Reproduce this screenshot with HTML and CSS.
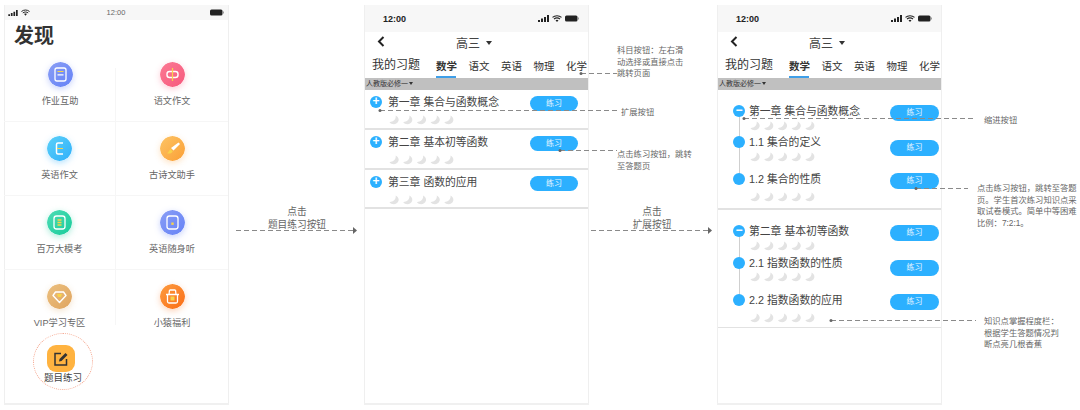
FILE: index.html
```html
<!DOCTYPE html>
<html lang="zh-CN">
<head>
  <meta charset="UTF-8" />
  <title>发现 / 我的习题 流程图</title>
  <link rel="stylesheet" href="styles.css">
</head>
<body>

  <svg class="defs" width="0" height="0">
    <defs>
      <symbol id="banana" viewBox="0 0 10 10">
        <path d="M6.6 .4C7.4 3.6 5 6.8 .5 7.2 2.2 9.8 8.2 10.4 9.6 5.6 10.1 3.6 8.6 1.2 6.6 .4Z" fill="#e3e3e3"/>
      </symbol>
      <symbol id="signal" viewBox="0 0 11 7">
        <path d="M0 5h2v2H0zM3 3.5h2V7H3zM6 2h2v5H6zM9 0h2v7H9z" fill="currentColor"/>
      </symbol>
      <symbol id="wifi" viewBox="0 0 10 7">
        <path d="M.5 2.4C3 .2 7 .2 9.500 2.400M2 4C3.800 2.600 6.200 2.600 8 4" fill="none" stroke="currentColor" stroke-width="1.100"/>
        <path d="M3.500 5.200C4.400 4.500 5.600 4.500 6.500 5.200L5 7Z" fill="currentColor"/>
      </symbol>
      <symbol id="battery" viewBox="0 0 14 7">
        <rect width="12.500" height="6" y=".5" rx="1.500" fill="currentColor"/>
        <rect x="13" y="2.500" width="1" height="2" fill="#999"/>
      </symbol>
      <symbol id="bananas" viewBox="0 0 65 10">
        <use href="#banana" x="0" width="10" height="10"/>
        <use href="#banana" x="13.700" width="10" height="10"/>
        <use href="#banana" x="27.400" width="10" height="10"/>
        <use href="#banana" x="41.100" width="10" height="10"/>
        <use href="#banana" x="54.800" width="10" height="10"/>
      </symbol>
      <linearGradient id="g-blue" x1="0" y1="0" x2="1" y2="1"><stop offset="0" stop-color="#8a9ef5"/><stop offset="1" stop-color="#6582f7"/></linearGradient>
      <linearGradient id="g-red" x1="0" y1="0" x2="1" y2="1"><stop offset="0" stop-color="#fb7a94"/><stop offset="1" stop-color="#f7587c"/></linearGradient>
      <linearGradient id="g-sky" x1="0" y1="0" x2="1" y2="1"><stop offset="0" stop-color="#5cd0f8"/><stop offset="1" stop-color="#2fb0fb"/></linearGradient>
      <linearGradient id="g-orange" x1="0" y1="0" x2="1" y2="1"><stop offset="0" stop-color="#fdc465"/><stop offset="1" stop-color="#fb9f35"/></linearGradient>
      <linearGradient id="g-green" x1="0" y1="0" x2="1" y2="1"><stop offset="0" stop-color="#4fdcb6"/><stop offset="1" stop-color="#17cc9a"/></linearGradient>
      <linearGradient id="g-gold" x1="0" y1="0" x2="1" y2="1"><stop offset="0" stop-color="#ecc07f"/><stop offset="1" stop-color="#dfa45f"/></linearGradient>
      <linearGradient id="g-fire" x1="0" y1="0" x2="1" y2="1"><stop offset="0" stop-color="#fd9c3f"/><stop offset="1" stop-color="#fa6d17"/></linearGradient>
    </defs>
  </svg>

  <div class="canvas">

    <!-- 发现页 -->
    <section class="phone phone-find">
      <div class="status status-small">
        <span class="status-icons">
          <svg width="10" height="6"><use href="#signal"/></svg>
          <svg width="9" height="7"><use href="#wifi"/></svg>
        </span>
        <span class="status-time">12:00</span>
        <svg class="status-batt" width="14" height="7"><use href="#battery"/></svg>
      </div>
      <h1 class="find-title">发现</h1>
      <div class="find-grid">
        <div class="cell">
          <svg class="disc disc-blue" viewBox="0 0 25 25"><circle cx="12.500" cy="12.500" r="12.500" fill="url(#g-blue)"/><rect x="7" y="6" width="11" height="13" rx="2" fill="none" stroke="#fff" stroke-width="1.300"/><path d="M9.500 9.500h6" stroke="#f7d34a" stroke-width="1.200"/><path d="M9.500 12.800h6" stroke="#fff" stroke-width="1.200"/></svg>
          <span>作业互助</span>
        </div>
        <div class="cell">
          <svg class="disc disc-red" viewBox="0 0 25 25"><circle cx="12.500" cy="12.500" r="12.500" fill="url(#g-red)"/><rect x="7" y="9.500" width="11" height="6" rx="2.500" fill="none" stroke="#fff" stroke-width="1.400"/><path d="M12.500 6v13" stroke="#f7d34a" stroke-width="1.200"/></svg>
          <span>语文作文</span>
        </div>
        <div class="cell">
          <svg class="disc disc-sky" viewBox="0 0 25 25"><circle cx="12.500" cy="12.500" r="12.500" fill="url(#g-sky)"/><path d="M16 7h-5a1.500 1.500 0 0 0-1.500 1.500v8A1.500 1.500 0 0 0 11 18h5" fill="none" stroke="#fff" stroke-width="1.500"/><path d="M10 12.500h6" stroke="#f7d34a" stroke-width="1.200"/></svg>
          <span>英语作文</span>
        </div>
        <div class="cell">
          <svg class="disc disc-orange" viewBox="0 0 25 25"><circle cx="12.500" cy="12.500" r="12.500" fill="url(#g-orange)"/><path d="M18.500 6.500 20 8 13.500 14.500 11 12Z" fill="#fff"/><path d="M10.300 13 12.800 15.500C11.500 17.500 9.500 17.800 7 17.500 8.500 16.500 9 14.500 10.300 13Z" fill="#f7d34a"/></svg>
          <span>古诗文助手</span>
        </div>
        <div class="cell">
          <svg class="disc disc-green" viewBox="0 0 25 25"><circle cx="12.500" cy="12.500" r="12.500" fill="url(#g-green)"/><rect x="7" y="6" width="11" height="13" rx="2.500" fill="none" stroke="#fff" stroke-width="1.300"/><path d="M10.500 10h4M10.500 12.500h4M10.500 15h4" stroke="#f7d34a" stroke-width="1.300"/></svg>
          <span>百万大模考</span>
        </div>
        <div class="cell">
          <svg class="disc disc-blue" viewBox="0 0 25 25"><circle cx="12.500" cy="12.500" r="12.500" fill="url(#g-blue)"/><rect x="7" y="6" width="11" height="13" rx="2.500" fill="none" stroke="#fff" stroke-width="1.300"/><rect x="11.300" y="12.500" width="2.400" height="2.400" fill="#f7d34a"/></svg>
          <span>英语随身听</span>
        </div>
        <div class="cell">
          <svg class="disc disc-gold" viewBox="0 0 25 25"><circle cx="12.500" cy="12.500" r="12.500" fill="url(#g-gold)"/><path d="M8.500 8h8L19 11.500 12.500 18.500 6 11.500Z" fill="none" stroke="#fff" stroke-width="1.400" stroke-linejoin="round"/><path d="M10 10h5l-1 3h-3Z" fill="#f7d34a"/></svg>
          <span>VIP学习专区</span>
        </div>
        <div class="cell">
          <svg class="disc disc-fire" viewBox="0 0 25 25"><circle cx="12.500" cy="12.500" r="12.500" fill="url(#g-fire)"/><path d="M6 10.500h13M7.500 10.500v7a1.500 1.500 0 0 0 1.500 1.500h7a1.500 1.500 0 0 0 1.500-1.500v-7M9 10.500 9.500 6M16 10.500 15.500 6M9.500 6h6" fill="none" stroke="#fff" stroke-width="1.300"/><rect x="10.500" y="12.500" width="4" height="4" fill="#f7d34a"/></svg>
          <span>小猿福利</span>
        </div>
      </div>
      <div class="practice-ring">
        <div class="practice-icon">
          <svg width="16" height="16" viewBox="0 0 16 16"><path d="M8 2.500H2v11.500h11.500V8" fill="none" stroke="#333" stroke-width="1.500"/><path d="M6 10.500 6.500 8 12.500 2 14.500 4 8.500 10Z" fill="#333"/></svg>
        </div>
        <span>题目练习</span>
      </div>
    </section>

    <!-- 我的习题：章列表 -->
    <section class="phone">
      <div class="status">
        <span class="status-clock">12:00</span>
        <span class="status-icons">
          <svg width="11" height="7"><use href="#signal"/></svg>
          <svg width="10" height="7"><use href="#wifi"/></svg>
          <svg width="14" height="7"><use href="#battery"/></svg>
        </span>
      </div>
      <div class="nav">
        <svg class="nav-back" width="8" height="11" viewBox="0 0 8 11"><path d="M6.500 1 2 5.500 6.500 10" fill="none" stroke="#222" stroke-width="2"/></svg>
        <span class="nav-grade">高三</span>
        <span class="caret"></span>
      </div>
      <div class="tabs">
        <span class="tabs-title">我的习题</span>
        <span class="tab tab-active">数学</span>
        <span class="tab">语文</span>
        <span class="tab">英语</span>
        <span class="tab">物理</span>
        <span class="tab">化学</span>
      </div>
      <div class="edition">人教版必修一<span class="caret caret-small"></span></div>
      <div class="chapter">
        <div class="chapter-head">
          <span class="dot">+</span>
          <span class="chapter-name">第一章 集合与函数概念</span>
          <span class="btn">练习</span>
        </div>
        <svg class="bananas" width="65" height="10"><use href="#bananas"/></svg>
      </div>
      <div class="chapter">
        <div class="chapter-head">
          <span class="dot">+</span>
          <span class="chapter-name">第二章 基本初等函数</span>
          <span class="btn">练习</span>
        </div>
        <svg class="bananas" width="65" height="10"><use href="#bananas"/></svg>
      </div>
      <div class="chapter">
        <div class="chapter-head">
          <span class="dot">+</span>
          <span class="chapter-name">第三章 函数的应用</span>
          <span class="btn">练习</span>
        </div>
        <svg class="bananas" width="65" height="10"><use href="#bananas"/></svg>
      </div>
    </section>

    <!-- 我的习题：展开 -->
    <section class="phone phone-open">
      <div class="status">
        <span class="status-clock">12:00</span>
        <span class="status-icons">
          <svg width="11" height="7"><use href="#signal"/></svg>
          <svg width="10" height="7"><use href="#wifi"/></svg>
          <svg width="14" height="7"><use href="#battery"/></svg>
        </span>
      </div>
      <div class="nav">
        <svg class="nav-back" width="8" height="11" viewBox="0 0 8 11"><path d="M6.500 1 2 5.500 6.500 10" fill="none" stroke="#222" stroke-width="2"/></svg>
        <span class="nav-grade">高三</span>
        <span class="caret"></span>
      </div>
      <div class="tabs">
        <span class="tabs-title">我的习题</span>
        <span class="tab tab-active">数学</span>
        <span class="tab">语文</span>
        <span class="tab">英语</span>
        <span class="tab">物理</span>
        <span class="tab">化学</span>
      </div>
      <div class="edition">人教版必修一<span class="caret caret-small"></span></div>

      <div class="tree">
        <div class="tree-row tree-top">
          <span class="dot dot-tree">&minus;</span>
          <span class="chapter-name">第一章 集合与函数概念</span>
          <span class="btn">练习</span>
          <svg class="bananas" width="65" height="10"><use href="#bananas"/></svg>
        </div>
        <div class="tree-row tree-mid">
          <span class="dot dot-tree"></span>
          <span class="chapter-name">1.1 集合的定义</span>
          <span class="btn btn-low">练习</span>
          <svg class="bananas" width="65" height="10"><use href="#bananas"/></svg>
        </div>
        <div class="tree-row tree-end">
          <span class="dot dot-tree"></span>
          <span class="chapter-name">1.2 集合的性质</span>
          <span class="btn">练习</span>
          <svg class="bananas" width="65" height="10"><use href="#bananas"/></svg>
        </div>
      </div>

      <div class="tree tree-second">
        <div class="tree-row tree-top">
          <span class="dot dot-tree">&minus;</span>
          <span class="chapter-name">第二章 基本初等函数</span>
          <span class="btn">练习</span>
          <svg class="bananas" width="65" height="10"><use href="#bananas"/></svg>
        </div>
        <div class="tree-row tree-mid">
          <span class="dot dot-tree"></span>
          <span class="chapter-name">2.1 指数函数的性质</span>
          <span class="btn btn-low">练习</span>
          <svg class="bananas" width="65" height="10"><use href="#bananas"/></svg>
        </div>
        <div class="tree-row tree-end">
          <span class="dot dot-tree"></span>
          <span class="chapter-name">2.2 指数函数的应用</span>
          <span class="btn">练习</span>
          <svg class="bananas" width="65" height="10"><use href="#bananas"/></svg>
        </div>
      </div>
    </section>

    <!-- 连接线和说明 -->
    <svg class="wires" width="1080" height="410">
      <g fill="none" stroke="#8a8a8a" stroke-width="1" stroke-dasharray="5 3">
        <path d="M236 230.500H353"/>
        <path d="M591 230.500H708"/>
        <path d="M581 73.500H617"/>
        <path d="M380 110.500H617"/>
        <path d="M560 150.500H617"/>
        <path d="M744 118.500H976"/>
        <path d="M916 188.500H968"/>
        <path d="M831 320.500H976"/>
      </g>
      <g fill="#666">
        <path d="M353 227 357 230.500 353 234Z"/>
        <path d="M708 227 712 230.500 708 234Z"/>
        <circle cx="581" cy="73.500" r="1.500"/>
        <circle cx="380" cy="110.500" r="1.500"/>
        <circle cx="560" cy="150.500" r="1.500"/>
        <circle cx="744" cy="118.500" r="1.500"/>
        <circle cx="916" cy="188.500" r="1.500"/>
        <circle cx="831" cy="320.500" r="1.500"/>
      </g>
    </svg>

    <div class="flow-label flow-a">点击<br>题目练习按钮</div>
    <div class="flow-label flow-b">点击<br>扩展按钮</div>

    <p class="note note-subject">科目按钮：左右滑<br>动选择或直接点击<br>跳转页面</p>
    <p class="note note-expand">扩展按钮</p>
    <p class="note note-jump">点击练习按钮，跳转<br>至答题页</p>
    <p class="note note-fold">缩进按钮</p>
    <p class="note note-first">点击练习按钮，跳转至答题<br>页。学生首次练习知识点采<br>取试卷模式。简单中等困难<br>比例：7:2:1。</p>
    <p class="note note-level">知识点掌握程度栏：<br>根据学生答题情况判<br>断点亮几根香蕉</p>

  </div>

</body>
</html>
```

FILE: styles.css
```css
* {
  box-sizing: border-box;
}

body {
  margin: 0;
  background-color: white;
  color: #333;
  font-family: "Liberation Sans", "Noto Sans CJK SC", sans-serif;
}

.defs {
  position: absolute;
}

.canvas {
  position: relative;
  display: flex;
  gap: 129px;
  width: 1080px;
  height: 410px;
  padding: 5px 0 5px 4px;
  overflow: hidden;
}

.canvas .phone:nth-child(2) {
  margin-left: 6px;
}

.phone {
  flex: none;
  width: 225px;
  height: 400px;
  background-color: white;
  border-left: 1px solid #efefef;
  border-right: 1px solid #efefef;
  border-bottom: 2px solid #f0f0f0;
}

.phone-open {
  margin-left: -1px;
}

/* status bars */
.status {
  display: flex;
  align-items: center;
  justify-content: space-between;
  height: 27px;
  padding: 0 9px 0 18px;
  background-color: #f7f7f7;
  color: #222;
}

.status-clock {
  font-size: 9px;
  font-weight: 700;
}

.status-icons {
  display: flex;
  align-items: center;
  gap: 3px;
}

.status-icons svg {
  display: block;
}

.status-small {
  display: grid;
  grid-template-columns: 1fr auto 1fr;
  align-items: center;
  height: 15px;
  padding: 0 4px 0 3px;
}

.status-batt {
  justify-self: end;
}

.status-time {
  font-size: 7.500px;
  color: #666;
}

/* discover page */
.find-title {
  height: 28px;
  margin: 0 0 0 9px;
  font-size: 20px;
  line-height: 32px;
  font-weight: 700;
  color: #333;
}

.find-grid {
  display: grid;
  grid-template-columns: 112px 112px;
  grid-template-rows: 74px 74px 74px 55px;
  margin-left: -1px;
}

.cell {
  display: flex;
  flex-direction: column;
  align-items: center;
  padding-top: 14px;
  font-size: 9.200px;
  color: #666;
}

.cell:nth-child(-n+6) {
  border-bottom: 1px solid #f6f6f6;
}

.cell:nth-child(odd) {
  border-right: 1px solid #f6f6f6;
}

.cell:first-child {
  border-right: none;
  background: linear-gradient(#f6f6f6, #f6f6f6) 100% 20px / 1px 100% no-repeat;
}

.cell span {
  margin-top: 8px;
  line-height: 13px;
  white-space: nowrap;
}

.disc {
  flex: none;
  display: block;
  width: 25px;
  height: 25px;
  border-radius: 50%;
}

.disc-blue { box-shadow: 0 2px 6px rgba(101, 130, 247, 0.35); }
.disc-red { box-shadow: 0 2px 6px rgba(247, 88, 124, 0.3); }
.disc-sky { box-shadow: 0 2px 6px rgba(47, 176, 251, 0.35); }
.disc-orange { box-shadow: 0 2px 6px rgba(251, 159, 53, 0.3); }
.disc-green { box-shadow: 0 2px 6px rgba(23, 204, 154, 0.35); }
.disc-gold { box-shadow: 0 2px 6px rgba(223, 164, 95, 0.3); }
.disc-fire { box-shadow: 0 2px 6px rgba(250, 109, 23, 0.3); }

.practice-ring {
  display: flex;
  flex-direction: column;
  align-items: center;
  width: 60px;
  height: 57px;
  margin: 8px 0 0 28px;
  padding-top: 11px;
  border: 1px dotted #f5a78f;
  border-radius: 50%;
  font-size: 9.500px;
  color: #444;
}

.practice-icon {
  flex: none;
  display: flex;
  align-items: center;
  justify-content: center;
  width: 28px;
  height: 27px;
  margin-right: 4px;
  background-color: #ffb340;
  border-radius: 9px;
}

.practice-ring span {
  line-height: 12px;
  white-space: nowrap;
}

/* top of the exercise page */
.nav {
  display: flex;
  align-items: center;
  height: 20px;
  padding: 1px 0 0 12px;
}

.nav-back {
  display: block;
  margin-top: -2px;
}

.nav-grade {
  margin-left: 71px;
  font-size: 12px;
  color: #444;
}

.caret {
  width: 0;
  height: 0;
  margin-left: 6px;
  border-left: 3px solid transparent;
  border-right: 3px solid transparent;
  border-top: 4px solid #333;
}

.caret-small {
  display: inline-block;
  margin-left: 1px;
  vertical-align: 1px;
  border-left-width: 2px;
  border-right-width: 2px;
  border-top-width: 3px;
}

.tabs {
  display: flex;
  align-items: flex-end;
  height: 26px;
  padding-left: 7px;
  color: #333;
}

.tabs-title {
  flex: none;
  width: 64px;
  padding-bottom: 6px;
  font-size: 12px;
  line-height: 14px;
  white-space: nowrap;
}

.tab {
  flex: none;
  width: 32.500px;
  height: 26px;
  padding-top: 7px;
  font-size: 10.500px;
  line-height: 14px;
  white-space: nowrap;
}

.tab-active {
  font-weight: 700;
  background: linear-gradient(#3f9fe8, #3f9fe8) 0 100% / 20px 2px no-repeat;
}

.edition {
  height: 12px;
  padding-left: 1px;
  background-color: #c0c0c0;
  font-size: 7px;
  line-height: 12px;
  color: #333;
}

/* chapter cards */
.chapter {
  height: 40px;
  padding: 6px 10px 0 5px;
  border-bottom: 2px solid #e2e2e2;
}

.chapter:last-child {
  height: 39px;
}

.chapter-head {
  display: flex;
  align-items: center;
  height: 15px;
}

.chapter-head .dot,
.chapter-head .chapter-name {
  margin-top: -3px;
}

.dot {
  flex: none;
  width: 12px;
  height: 12px;
  border-radius: 50%;
  background-color: #2cb0ff;
  color: white;
  font-size: 12px;
  line-height: 11px;
  font-weight: 700;
  text-align: center;
}

.chapter-name {
  margin-left: 6px;
  font-size: 10.800px;
  line-height: 14px;
  color: #444;
  white-space: nowrap;
}

.btn {
  width: 48px;
  height: 15px;
  margin-left: auto;
  border-radius: 8px;
  background-color: #2cb0ff;
  color: #e8f6ff;
  font-size: 8px;
  line-height: 15px;
  text-align: center;
}

.bananas {
  display: block;
  margin: 4px 0 0 19px;
}

/* expanded tree */
.tree {
  position: relative;
  height: 120px;
  padding-top: 14px;
  border-bottom: 2px solid #e2e2e2;
}

.tree::before {
  content: "";
  position: absolute;
  left: 20.500px;
  top: 24px;
  height: 70px;
  border-left: 1px solid #cfcfcf;
}

.tree-second {
  height: 118px;
  border-bottom: 1px solid #e2e2e2;
}

.tree-row {
  position: relative;
  display: flex;
  align-items: flex-start;
  flex-wrap: wrap;
  padding: 0 1px 0 15px;
}

.tree-top {
  height: 31px;
}

.tree-mid {
  height: 37px;
}

.tree-end {
  height: 35px;
}

.tree-second .tree-top {
  height: 32px;
}

.dot-tree {
  position: relative;
  z-index: 1;
  margin-top: 1px;
  font-size: 12px;
}

.tree-row .chapter-name {
  margin-left: 4px;
}

.tree-row .btn {
  width: 49px;
  height: 16px;
  margin-top: 1px;
  margin-right: 1px;
  line-height: 16px;
}

.tree-row .btn-low {
  margin-top: 5px;
}

.tree-second .tree-row .btn-low {
  margin-top: 4px;
}

.tree-row .bananas {
  position: absolute;
  left: 32px;
  top: 17px;
  margin: 0;
}

.tree-mid .bananas {
  top: 17px;
}

.tree-end .bananas {
  top: 20px;
}

.tree-second .tree-mid .bananas {
  top: 16px;
}

/* connector overlay */
.wires {
  position: absolute;
  left: 0;
  top: 0;
  pointer-events: none;
}

.flow-label {
  position: absolute;
  width: 80px;
  top: 205px;
  font-size: 9.700px;
  line-height: 13px;
  color: #666;
  text-align: center;
}

.flow-a { left: 257px; }
.flow-b { left: 612px; }

.note {
  position: absolute;
  margin: 0;
  font-size: 8.300px;
  line-height: 11.700px;
  color: #666;
  white-space: nowrap;
}

.note-subject { left: 617px; top: 45px; }
.note-expand { left: 621px; top: 107px; }
.note-jump { left: 617px; top: 149px; }
.note-fold { left: 984px; top: 115px; }
.note-first { left: 977px; top: 183px; }
.note-level { left: 984px; top: 316px; }
```
